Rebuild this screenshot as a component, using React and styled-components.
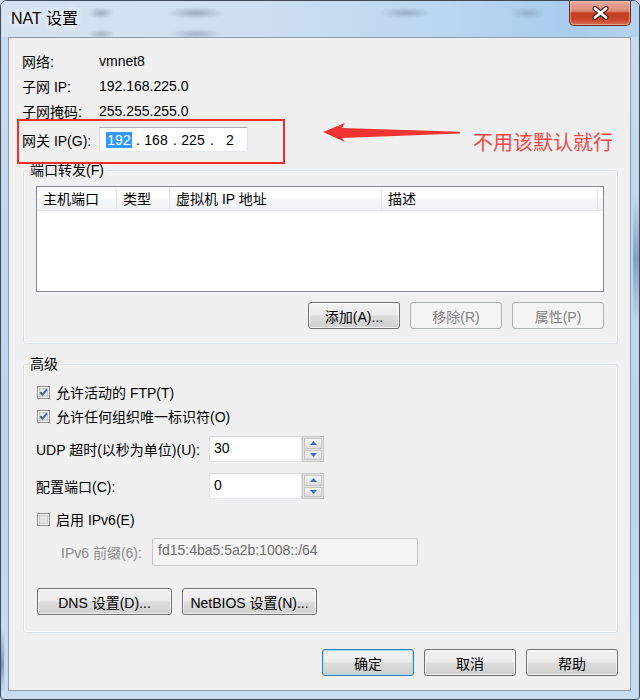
import React from 'react';
import styled, { createGlobalStyle, css } from 'styled-components';

const GlobalStyle = createGlobalStyle`
  html, body {
    margin: 0;
    padding: 0;
    background: #c9dcef;
  }
  body {
    font-family: "Liberation Sans", "Noto Sans CJK SC", sans-serif;
    font-size: 14px;
    color: #000;
  }
  * {
    box-sizing: border-box;
  }
`;

const Window = styled.div`
  width: 640px;
  height: 700px;
  display: flex;
  flex-direction: column;
  border: 1px solid #3f4b59;
  border-radius: 7px 7px 4px 4px;
  padding: 0 8px 8px 7px;
  overflow: hidden;
  background:
    linear-gradient(180deg, transparent 0, transparent 90%, rgba(60, 95, 140, 0.55) 95%, transparent 99%) left top / 3px 100% no-repeat,
    linear-gradient(180deg, transparent 28%, rgba(60, 95, 140, 0.45) 37%, transparent 46%) right top / 6px 100% no-repeat,
    linear-gradient(180deg, #cadcef 0%, #c0d6ed 40%, #bcd4ec 70%, #c9ddf1 100%);
`;

const TitleBar = styled.div`
  height: 36px;
  margin: 0 -8px 0 -7px;
  padding: 0 8px 0 10px;
  display: flex;
  align-items: flex-start;
  background:
    radial-gradient(ellipse 13px 6px at 100px 12px, rgba(60, 80, 105, 0.35), transparent),
    radial-gradient(ellipse 30px 6px at 195px 12px, rgba(60, 80, 105, 0.35), transparent),
    radial-gradient(ellipse 26px 6px at 405px 12px, rgba(60, 80, 105, 0.3), transparent),
    radial-gradient(ellipse 18px 6px at 527px 12px, rgba(60, 80, 105, 0.25), transparent),
    radial-gradient(ellipse 14px 5px at 100px 33px, rgba(60, 80, 105, 0.3), transparent),
    radial-gradient(ellipse 28px 5px at 195px 33px, rgba(60, 80, 105, 0.3), transparent),
    linear-gradient(90deg, #d5e3f1 0%, #cddff0 40%, #bad6f0 70%, #a9cbec 90%, #b5d3f0 100%);
`;

const Title = styled.span`
  margin-top: 8px;
  font-size: 16px;
  line-height: 20px;
  color: #000;
  text-shadow: 0 0 6px rgba(255, 255, 255, 0.95), 0 0 10px rgba(255, 255, 255, 0.8);
`;

const CloseButton = styled.div`
  margin-left: auto;
  width: 62px;
  height: 25px;
  border: 1px solid #6b2a1e;
  border-top: none;
  border-radius: 0 0 5px 5px;
  display: flex;
  align-items: center;
  justify-content: center;
  background: linear-gradient(180deg, #e8ab9d 0%, #dc8a76 42%, #c53d22 50%, #c8452b 78%, #dd6f52 100%);
  box-shadow: inset 0 0 0 1px rgba(255, 210, 200, 0.5);
`;

const Client = styled.div`
  flex: 1;
  display: flex;
  flex-direction: column;
  background: #f0f0f0;
  border: 1px solid #8e9bab;
  padding: 10px 12px 0 13px;
`;

const InfoRow = styled.div`
  display: flex;
  align-items: center;
  height: 25px;
`;

const Label = styled.span`
  width: ${p => p.$w || 77}px;
  flex: none;
  white-space: nowrap;
  color: ${p => (p.$muted ? '#8b8b8b' : '#000')};
`;

const AnnotRow = styled.div`
  display: flex;
  align-items: flex-start;
  margin: -4px 0 0 -5px;
  position: relative;
  z-index: 1;
`;

const RedBox = styled.div`
  width: 268px;
  flex: none;
  display: flex;
  align-items: center;
  border: 2px solid #ee2d2d;
  padding: 6px 0 10px 3px;
`;

const IpField = styled.div`
  width: 149px;
  height: 25px;
  display: flex;
  align-items: center;
  padding-left: 2px;
  background: #fff;
  border: 1px solid;
  border-color: #abadb3 #e2e3ea #e3e9ef #dbdfe6;
`;

const IpPart = styled.span`
  width: 34px;
  text-align: center;
`;

const IpDot = styled.span`
  width: 3px;
  text-align: center;
`;

const Selected = styled.span`
  display: inline-block;
  line-height: 16px;
  padding: 0 1px;
  background: #3399ff;
  color: #fff;
`;

const ArrowSvg = styled.svg`
  flex: none;
  margin: 2px 0 0 37px;
`;

const Annotation = styled.span`
  margin: 12px 0 0 11px;
  font-size: 20px;
  line-height: 24px;
  color: #f24848;
  white-space: nowrap;
`;

const Group = styled.fieldset`
  margin: ${p => p.$mt}px 0 0 1px;
  min-width: 0;
  border: 1px solid #d5dfe5;
  border-radius: 3px;
  padding: 7px 13px ${p => p.$pb}px 12px;
  box-shadow: inset 0 0 0 1px rgba(255, 255, 255, 0.6);
`;

const Legend = styled.legend`
  margin-left: -8px;
  padding: 0 2px;
  line-height: 18px;
  font-size: 14px;
  background: #f0f0f0;
`;

const ListView = styled.div`
  height: 106px;
  background: #fff;
  border: 1px solid #828790;
`;

const ListHeader = styled.div`
  display: flex;
  height: 24px;
  border-bottom: 1px solid #e3e5e8;
  background: linear-gradient(180deg, #ffffff 0%, #ffffff 45%, #f4f5f7 55%, #f1f2f4 100%);
`;

const HeaderCell = styled.div`
  width: ${p => p.$w}px;
  flex: ${p => (p.$w ? 'none' : '1')};
  padding-left: 6px;
  line-height: 24px;
  border-right: ${p => (p.$w ? '1px solid #e5e5e5' : 'none')};
  white-space: nowrap;
`;

const ButtonRow = styled.div`
  display: flex;
  justify-content: ${p => (p.$left ? 'flex-start' : 'flex-end')};
  gap: 10px;
  margin-top: ${p => p.$mt}px;
  margin-left: ${p => p.$ml || 0}px;
`;

const Button = styled.button`
  width: ${p => p.$w || 92}px;
  height: 27px;
  padding: 0;
  font: inherit;
  font-size: 14px;
  color: #000;
  border: 1px solid #707070;
  border-radius: 3px;
  background: linear-gradient(180deg, #f2f2f2 0%, #ebebeb 49%, #dddddd 51%, #cfcfcf 100%);
  box-shadow: inset 0 0 0 1px rgba(255, 255, 255, 0.75);
  white-space: nowrap;

  &:disabled {
    color: #838383;
    border-color: #adb2b5;
    background: #f4f4f4;
    box-shadow: none;
  }

  ${p => p.$default && css`
    border-color: #3c7fb1;
    box-shadow: inset 0 0 0 1px #a6ddf6;
  `}
`;

const CheckRow = styled.div`
  display: flex;
  align-items: center;
  gap: 6px;
  height: 24px;
  margin-top: ${p => p.$mt || 0}px;
  padding-left: 1px;
`;

const FieldRow = styled.div`
  display: flex;
  align-items: center;
  margin-top: ${p => p.$mt}px;
  margin-left: ${p => p.$ml || 0}px;
`;

const SpinBox = styled.div`
  display: flex;
  width: 115px;
  height: 26px;
`;

const SpinText = styled.div`
  flex: 1;
  background: #fff;
  border: 1px solid;
  border-color: #d5d8dd #e2e3ea #e3e9ef #dbdfe6;
  padding: 1px 0 0 4px;
  line-height: 20px;
`;

const SpinButtons = styled.div`
  width: 22px;
  display: flex;
  flex-direction: column;
  gap: 1px;
  padding: 1px;
  border: 1px solid #c6c6c6;
  background: #e6e6e6;
`;

const SpinBtn = styled.div`
  flex: 1;
  display: flex;
  align-items: center;
  justify-content: center;
  border: 1px solid #c4c4c4;
  background: linear-gradient(180deg, #f7f7f7 0%, #ececec 50%, #dedede 100%);
`;

const DisabledField = styled.div`
  width: 266px;
  height: 28px;
  background: #f4f4f4;
  border: 1px solid #c9c9c9;
  border-radius: 2px;
  padding: 3px 0 0 5px;
  color: #6d6d6d;
`;

const Checkbox = ({ checked }) => (
  <svg width="13" height="13" viewBox="0 0 13 13">
    <rect x="0.5" y="0.5" width="12" height="12" fill="#f6f6f6" stroke="#8f8f8f" />
    <rect x="2.5" y="2.5" width="8" height="8" fill="#e2e2e2" stroke="#c9c9c9" />
    {checked && (
      <path d="M3.2 6.2 L5.4 8.8 L9.9 3.3" stroke="#4d6088" strokeWidth="1.9" fill="none" />
    )}
  </svg>
);

const Tri = ({ down }) => (
  <svg width="7" height="4" viewBox="0 0 7 4">
    <path d={down ? 'M0 0 L7 0 L3.5 4Z' : 'M0 4 L3.5 0 L7 4Z'} fill="#4a6bbd" />
  </svg>
);

const Spin = ({ value }) => (
  <SpinBox>
    <SpinText>{value}</SpinText>
    <SpinButtons>
      <SpinBtn><Tri /></SpinBtn>
      <SpinBtn><Tri down /></SpinBtn>
    </SpinButtons>
  </SpinBox>
);

export default function App() {
  return (
    <>
      <GlobalStyle />
      <Window>
        <TitleBar>
          <Title>NAT 设置</Title>
          <CloseButton>
            <svg width="17" height="14" viewBox="0 0 17 14">
              <path d="M3 2.5 L14 11.5 M14 2.5 L3 11.5" stroke="#4a2019" strokeWidth="5" strokeLinecap="round" />
              <path d="M3 2.5 L14 11.5 M14 2.5 L3 11.5" stroke="#fff" strokeWidth="2.8" strokeLinecap="round" />
            </svg>
          </CloseButton>
        </TitleBar>

        <Client>
          <InfoRow><Label>网络:</Label>vmnet8</InfoRow>
          <InfoRow><Label>子网 IP:</Label>192.168.225.0</InfoRow>
          <InfoRow><Label>子网掩码:</Label>255.255.255.0</InfoRow>

          <AnnotRow>
            <RedBox>
              <Label>网关 IP(G):</Label>
              <IpField>
                <IpPart><Selected>192</Selected></IpPart>
                <IpDot>.</IpDot>
                <IpPart>168</IpPart>
                <IpDot>.</IpDot>
                <IpPart>225</IpPart>
                <IpDot>.</IpDot>
                <IpPart>2</IpPart>
              </IpField>
            </RedBox>
            <ArrowSvg width="140" height="22" viewBox="0 0 140 22">
              <path d="M1 11 L23 2 L20 7 L138 10.8 L138 12.4 L20 17 L23 21 Z" fill="#f03434" />
            </ArrowSvg>
            <Annotation>不用该默认就行</Annotation>
          </AnnotRow>

          <Group $mt={-3} $pb={14}>
            <Legend>端口转发(F)</Legend>
            <ListView>
              <ListHeader>
                <HeaderCell $w={80}>主机端口</HeaderCell>
                <HeaderCell $w={53}>类型</HeaderCell>
                <HeaderCell $w={212}>虚拟机 IP 地址</HeaderCell>
                <HeaderCell $w={216}>描述</HeaderCell>
                <HeaderCell />
              </ListHeader>
            </ListView>
            <ButtonRow $mt={10}>
              <Button>添加(A)...</Button>
              <Button disabled>移除(R)</Button>
              <Button disabled>属性(P)</Button>
            </ButtonRow>
          </Group>

          <Group $mt={11} $pb={17}>
            <Legend>高级</Legend>
            <CheckRow><Checkbox checked />允许活动的 FTP(T)</CheckRow>
            <CheckRow><Checkbox checked />允许任何组织唯一标识符(O)</CheckRow>
            <FieldRow $mt={8}>
              <Label $w={173}>UDP 超时(以秒为单位)(U):</Label>
              <Spin value="30" />
            </FieldRow>
            <FieldRow $mt={11}>
              <Label $w={173}>配置端口(C):</Label>
              <Spin value="0" />
            </FieldRow>
            <CheckRow $mt={8}><Checkbox />启用 IPv6(E)</CheckRow>
            <FieldRow $mt={7} $ml={25}>
              <Label $w={91} $muted>IPv6 前缀(6):</Label>
              <DisabledField>fd15:4ba5:5a2b:1008::/64</DisabledField>
            </FieldRow>
            <ButtonRow $left $mt={22} $ml={1}>
              <Button $w={135}>DNS 设置(D)...</Button>
              <Button $w={135}>NetBIOS 设置(N)...</Button>
            </ButtonRow>
          </Group>

          <ButtonRow $mt={16}>
            <Button $default>确定</Button>
            <Button>取消</Button>
            <Button>帮助</Button>
          </ButtonRow>
        </Client>
      </Window>
    </>
  );
}
